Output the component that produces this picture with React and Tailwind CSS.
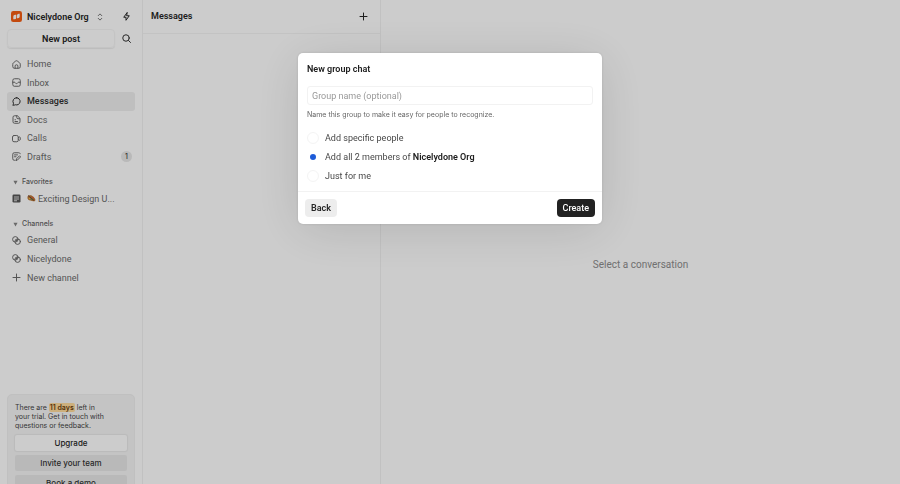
import React, { useState } from "react";

function Icon({ children, className = "size-[9px]" }) {
  return (
    <svg
      viewBox="0 0 18 18"
      fill="none"
      stroke="currentColor"
      strokeWidth="2"
      strokeLinecap="round"
      strokeLinejoin="round"
      aria-hidden="true"
      className={`shrink-0 ${className}`}
    >
      {children}
    </svg>
  );
}

const HomeIcon = () => (
  <Icon>
    <path d="M1.500 8.200c0-1 .4-1.800 1.200-2.400l4.600-3.700a2.800 2.800 0 0 1 3.400 0l4.600 3.700c.8.6 1.200 1.400 1.200 2.400v5.300a3 3 0 0 1-3 3h-9a3 3 0 0 1-3-3z" />
    <path d="M6.200 16.500v-4.200a2.800 2.800 0 0 1 5.600 0v4.200" />
  </Icon>
);
const InboxIcon = () => (
  <Icon>
    <path d="M1.500 9V5a3.500 3.500 0 0 1 3.500-3.500h8A3.500 3.500 0 0 1 16.500 5v8.500a3 3 0 0 1-3 3h-9a3 3 0 0 1-3-3z" />
    <path d="M1.500 8.500h4c.8 0 .9 2.700 3.500 2.700s2.700-2.700 3.500-2.700h4" />
  </Icon>
);
const ChatIcon = () => (
  <Icon>
    <path d="M9.500 1.500a7.200 7.200 0 1 1-2.800 14c-1.200.7-2.900 1-5.200.9 1.200-1.200 1.700-2.500 1.400-3.900A7.300 7.300 0 0 1 9.500 1.500z" />
  </Icon>
);
const DocIcon = () => (
  <Icon>
    <path d="M10 1.500H5a3 3 0 0 0-3 3v9a3 3 0 0 0 3 3h8a3 3 0 0 0 3-3v-6z" />
    <path d="M9.500 1.700V5A2.500 2.500 0 0 0 12 7.500h3.500M6 9.500h1M6 13h5" />
  </Icon>
);
const CallIcon = () => (
  <Icon>
    <rect x="1" y="3" width="11.500" height="12.500" rx="3" />
    <path d="m12.500 7.500 1.800-1.200c1-.7 2.200-.2 2.200 1v4c0 1.200-1.200 1.700-2.200 1l-1.800-1.200" />
  </Icon>
);
const DraftIcon = () => (
  <Icon>
    <path d="M16.500 3.500c-.5-1.300-1.500-2-3-2h-9a3 3 0 0 0-3 3v9a3 3 0 0 0 3 3h1.800M5 5.800h6M5 9.500h3" />
    <path d="m8.500 16.500.6-3 6-6 2.200 2.200-6 6z" />
  </Icon>
);
const PostIcon = () => (
  <svg viewBox="0 0 18 18" aria-hidden="true" className="size-[9px] shrink-0 text-[#555]">
    <rect x="1" y="1" width="16" height="16" rx="2.500" fill="currentColor" />
    <path d="M4 6h10M4 10h10M4 13.500h6" stroke="#fff" strokeWidth="1.600" />
  </svg>
);
const ChannelIcon = () => (
  <Icon>
    <circle cx="6.700" cy="6.700" r="5.500" />
    <circle cx="11.300" cy="11.300" r="5.500" />
    <path d="m7.800 10.200 2.400-2.400" />
  </Icon>
);
const PlusIcon = () => (
  <Icon>
    <path d="M9 2v14M2 9h14" />
  </Icon>
);

function NavItem({ icon, label, active, badge }) {
  return (
    <a
      href="#"
      className={`flex items-center gap-[6px] rounded-[3px] pr-[3px] pl-[5px] ${
        active ? "bg-[#efefef] font-medium text-[#303030]" : "text-[#6b6b6b]"
      }`}
    >
      {icon}
      <span className="flex-1 truncate">{label}</span>
      {badge && (
        <span className="flex size-[11px] items-center justify-center rounded-full bg-[#e8e8e8] font-['Inter',sans-serif] text-[7px] font-medium text-[#444]">
          {badge}
        </span>
      )}
    </a>
  );
}

function SectionTitle({ children }) {
  return (
    <h2 className="flex h-[14px] items-center gap-[4px] pl-[6px] font-['Inter',sans-serif] text-[7px] font-medium text-[#666]">
      <svg viewBox="0 0 6 6" aria-hidden="true" className="size-[5px]">
        <path d="M.5 1h5L3 5.500z" fill="#858585" />
      </svg>
      {children}
    </h2>
  );
}

function Sidebar() {
  return (
    <aside className="flex w-[143px] shrink-0 flex-col overflow-hidden border-r border-[#f2f2f2] px-[7px] text-[9px] leading-[12px]">
      <div className="mt-[8px] flex h-[17px] items-center">
        <button type="button" className="flex items-center pl-[4px] font-semibold text-[#262626]">
          <svg viewBox="0 0 24 24" aria-hidden="true" className="mr-[5px] size-[11px]">
            <rect width="24" height="24" rx="5" fill="#f45d13" />
            <path d="M5 18v-6q0-4 4-4h2.500v6q0 4-4 4zM13 16v-6q0-4 4-4h2v6q0 4-4 4z" fill="#fff" />
          </svg>
          Nicelydone Org
          <Icon className="ml-[7px] size-[8px] text-[#666]">
            <path d="m5 6 4-4 4 4M5 12l4 4 4-4" />
          </Icon>
        </button>
        <button type="button" aria-label="Activity" className="ml-auto flex w-[18px] justify-center text-[#262626]">
          <Icon>
            <path d="M10 1.500 3.500 10.500H8v6L14.500 7.500H10z" />
          </Icon>
        </button>
      </div>

      <div className="mt-[4px] flex items-center">
        <button
          type="button"
          className="h-[19px] flex-1 rounded-[4px] border border-[#f6f6f6] font-semibold text-[#262626] shadow-[0_1px_1px_#00000014]"
        >
          New post
        </button>
        <button type="button" aria-label="Search" className="ml-[2px] flex w-[18px] justify-center text-[#333]">
          <Icon>
            <circle cx="8" cy="8" r="6.500" />
            <path d="m13 13 4 4" />
          </Icon>
        </button>
      </div>

      <nav className="mt-[7px] grid h-[111px] auto-rows-fr">
        <NavItem icon={<HomeIcon />} label="Home" />
        <NavItem icon={<InboxIcon />} label="Inbox" />
        <NavItem icon={<ChatIcon />} label="Messages" active />
        <NavItem icon={<DocIcon />} label="Docs" />
        <NavItem icon={<CallIcon />} label="Calls" />
        <NavItem icon={<DraftIcon />} label="Drafts" badge="1" />
      </nav>

      <section className="mt-[9px]">
        <SectionTitle>Favorites</SectionTitle>
        <a href="#" className="flex h-[19px] items-center gap-[6px] pl-[5px] text-[#6b6b6b]">
          <PostIcon />
          <span className="flex items-center">
            <svg viewBox="0 0 18 18" aria-hidden="true" className="mr-[2px] size-[9px]">
              <path d="M1 5c3-4 8-3 11 0 4 3 6 7 4 9-3 2-6-1-9-1C3 13 0 10 1 5z" fill="#bd7739" />
              <path d="m2 3 12 10" stroke="#6b4b37" strokeWidth="2" />
              <circle cx="5" cy="9" r="1.500" fill="#e7bd3a" />
              <circle cx="12" cy="7" r="1.500" fill="#db583e" />
              <circle cx="9" cy="11" r="1.300" fill="#5c9a64" />
            </svg>
            Exciting Design U...
          </span>
        </a>
      </section>

      <section className="mt-[9px]">
        <SectionTitle>Channels</SectionTitle>
        <div className="grid h-[56px] auto-rows-fr">
          <NavItem icon={<ChannelIcon />} label="General" />
          <NavItem icon={<ChannelIcon />} label="Nicelydone" />
          <NavItem icon={<PlusIcon />} label="New channel" />
        </div>
      </section>

      <section className="mt-auto -mb-[12px] flex shrink-0 flex-col gap-[4px] rounded-[5px] border border-[#f0f0f0] bg-[#f5f5f5] px-[7px] pt-[8px] pb-[4px] font-['Inter',sans-serif] text-[8px] font-medium text-[#333]">
        <p className="mb-[1px] text-[7px] leading-[9px] font-normal text-[#444]">
          There are{" "}
          <mark className="rounded-[2px] bg-[#ffdb9c] px-px font-semibold text-[#6b3d0b]">11 days</mark>{" "}
          left in
          <br />
          your trial. Get in touch with
          <br />
          questions or feedback.
        </p>
        <button type="button" className="h-[16px] rounded-[2px] bg-white text-[#262626] shadow-[0_0_1px_1px_#0000000d]">
          Upgrade
        </button>
        <button type="button" className="h-[16px] rounded-[2px] bg-[#e8e8e8]">
          Invite your team
        </button>
        <button type="button" className="h-[16px] rounded-[2px] bg-[#e8e8e8]">
          Book a demo
        </button>
      </section>
    </aside>
  );
}

function GroupDialog() {
  const [choice, setChoice] = useState("all");
  const options = [
    ["specific", "Add specific people"],
    ["all", <>Add all 2 members of <strong className="font-semibold text-[#202020]">Nicelydone Org</strong></>],
    ["me", "Just for me"],
  ];
  return (
    <div className="fixed inset-0 flex items-start justify-center bg-black/20 pt-[53px]">
      <form
        role="dialog"
        aria-labelledby="dialog-title"
        onSubmit={(e) => e.preventDefault()}
        className="w-[304px] rounded-[5px] bg-white text-[9px] leading-[12px] shadow-[0_6px_50px_#0000001f,0_0_3px_#00000020]"
      >
        <div className="px-[9px] pt-[10px] pb-[6px]">
          <h2 id="dialog-title" className="font-semibold text-[#202020]">New group chat</h2>
          <input
            type="text"
            aria-label="Group name"
            aria-describedby="name-hint"
            placeholder="Group name (optional)"
            className="mt-[11px] block h-[19px] w-full rounded-[3px] border border-[#f2f2f2] px-[4px] outline-none placeholder:text-[#999]"
          />
          <p id="name-hint" className="mt-[4px] font-['Inter',sans-serif] text-[7px] text-[#666]">
            Name this group to make it easy for people to recognize.
          </p>
          <fieldset className="mt-[7px]">
            {options.map(([value, label]) => (
              <label key={value} className="flex h-[19px] items-center gap-[6px] text-[#484848]">
                <input
                  type="radio"
                  name="members"
                  value={value}
                  checked={choice === value}
                  onChange={() => setChoice(value)}
                  className="size-[12px] appearance-none rounded-full border border-[#f4f4f4] checked:border-[3px] checked:border-white checked:bg-[#1d5bd8]"
                />
                <span>{label}</span>
              </label>
            ))}
          </fieldset>
        </div>
        <div className="flex justify-between border-t border-[#f2f2f2] p-[7px]">
          <button type="button" className="h-[18px] rounded-[4px] bg-[#ededed] px-[6px] font-semibold text-[#262626]">
            Back
          </button>
          <button type="submit" className="h-[18px] rounded-[4px] bg-[#222] px-[6px] font-medium text-white">
            Create
          </button>
        </div>
      </form>
    </div>
  );
}

export default function App() {
  return (
    <div className="flex h-screen overflow-hidden bg-white font-['Roboto','Inter',sans-serif] text-[#262626]">
      <Sidebar />
      <section className="w-[238px] shrink-0 border-r border-[#f2f2f2]">
        <header className="flex h-[34px] items-center justify-between border-b border-[#f4f4f4] pr-[12px] pl-[8px] text-[9px]">
          <h1 className="font-semibold">Messages</h1>
          <button type="button" aria-label="New message">
            <PlusIcon />
          </button>
        </header>
      </section>
      <main className="flex flex-1 flex-col">
        <div className="h-[45px] shrink-0" />
        <div className="flex flex-1 items-center justify-center text-[10px] text-[#8c8c8c]">
          Select a conversation
        </div>
      </main>
      <GroupDialog />
    </div>
  );
}
